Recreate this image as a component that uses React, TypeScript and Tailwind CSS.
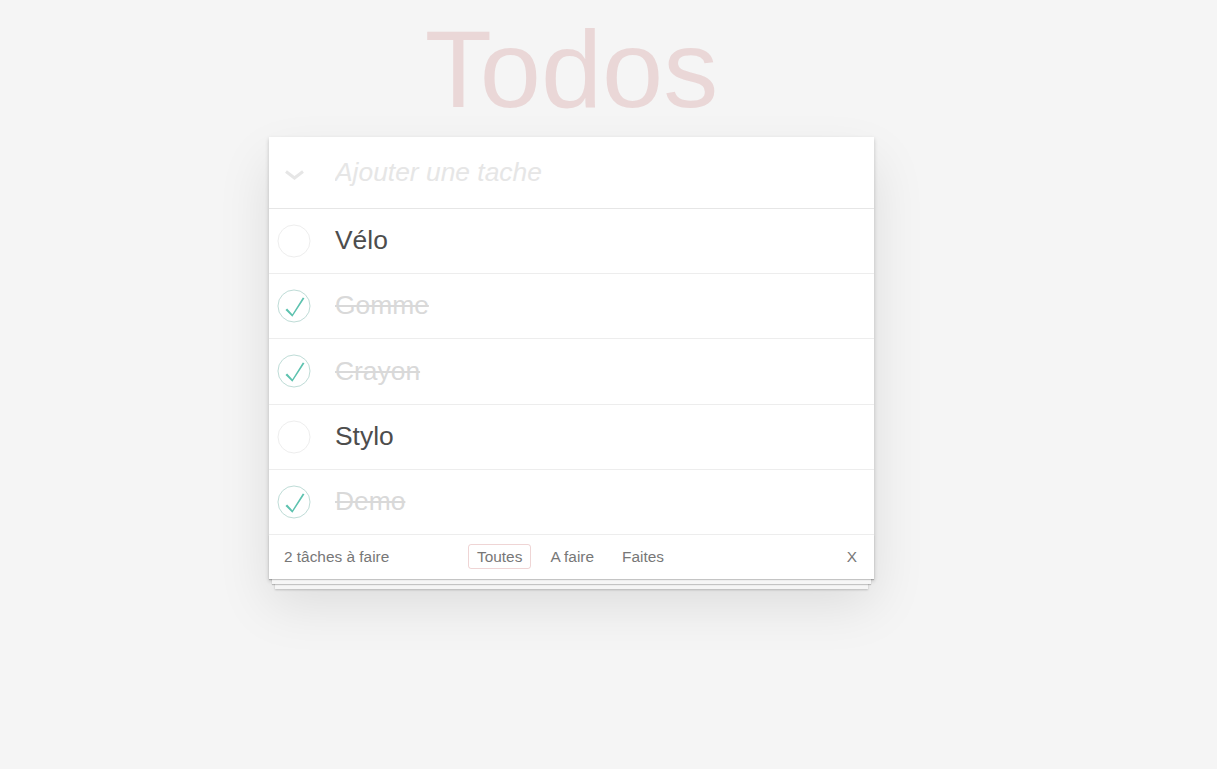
import React, { useState } from 'react';

type Todo = { id: number; title: string; done: boolean };

const initialTodos: Todo[] = [
  { id: 1, title: 'Vélo', done: false },
  { id: 2, title: 'Gomme', done: true },
  { id: 3, title: 'Crayon', done: true },
  { id: 4, title: 'Stylo', done: false },
  { id: 5, title: 'Demo', done: true },
];

const CheckCircle = ({ checked }: { checked: boolean }) => (
  <svg width="34" height="34" viewBox="-2 -2 104 104">
    <circle cx="50" cy="50" r="49" fill="none" stroke={checked ? '#bddad5' : '#ededed'} strokeWidth="3" />
    {checked && <path fill="#5dc2af" d="M77 24L45 75 29 58l-5 4 21 21 37-57z" />}
  </svg>
);

export default function App() {
  const [todos, setTodos] = useState<Todo[]>(initialTodos);
  const [filter, setFilter] = useState('Toutes');

  const left = todos.filter((t) => !t.done).length;

  const toggle = (id: number) =>
    setTodos((prev) => prev.map((t) => (t.id === id ? { ...t, done: !t.done } : t)));

  return (
    <div className="min-h-screen bg-[#f5f5f5] font-['Liberation_Sans',Arial,sans-serif] text-[#4d4d4d]">
      <div className="ml-[269px] w-[605px] pt-[14px]">
        <h1 className="text-center text-[110px] leading-[110px] text-[rgba(175,47,47,0.15)]">Todos</h1>

        <section className="mt-[13px] bg-white shadow-[0_2px_4px_0_rgba(0,0,0,0.2),0_25px_50px_0_rgba(0,0,0,0.1)]">
          <header className="flex h-[72px] items-center border-b border-[#e6e6e6]">
            <div className="mt-[4px] flex w-[50px] justify-center">
              <svg width="21" height="10" viewBox="0 0 21 10">
                <polyline points="2,1.5 10.5,8 19,1.5" fill="none" stroke="#e6e6e6" strokeWidth="3" />
              </svg>
            </div>
            <input
              className="ml-[16px] flex-1 bg-transparent text-[26.4px] outline-none placeholder:italic placeholder:text-[#e6e6e6]"
              placeholder="Ajouter une tache"
            />
          </header>

          <ul>
            {todos.map((t) => (
              <li key={t.id} className="flex h-[65.2px] items-center border-b border-[#ededed]">
                <button onClick={() => toggle(t.id)} className="flex w-[50px] justify-center">
                  <CheckCircle checked={t.done} />
                </button>
                <span
                  className={
                    t.done
                      ? 'ml-[16px] text-[26.4px] text-[#d9d9d9] line-through'
                      : 'ml-[16px] text-[26.4px]'
                  }
                >
                  {t.title}
                </span>
              </li>
            ))}
          </ul>

          <footer className="grid h-[44px] grid-cols-[1fr_auto_1fr] items-center pl-[15px] pr-[17px] text-[15.4px] text-[#777] shadow-[0_1px_1px_rgba(0,0,0,0.2),0_8px_0_-3px_#f6f6f6,0_9px_1px_-3px_rgba(0,0,0,0.2),0_16px_0_-6px_#f6f6f6,0_17px_2px_-6px_rgba(0,0,0,0.2)]">
            <span>{left} tâches à faire</span>
            <div className="flex gap-[10px]">
              {['Toutes', 'A faire', 'Faites'].map((f) => (
                <button
                  key={f}
                  onClick={() => setFilter(f)}
                  className={
                    filter === f
                      ? 'rounded-[3px] border border-[rgba(175,47,47,0.2)] px-[8px] py-0 leading-[23px]'
                      : 'rounded-[3px] border border-transparent px-[8px] py-0 leading-[23px]'
                  }
                >
                  {f}
                </button>
              ))}
            </div>
            <button className="justify-self-end">X</button>
          </footer>
        </section>
      </div>
    </div>
  );
}
